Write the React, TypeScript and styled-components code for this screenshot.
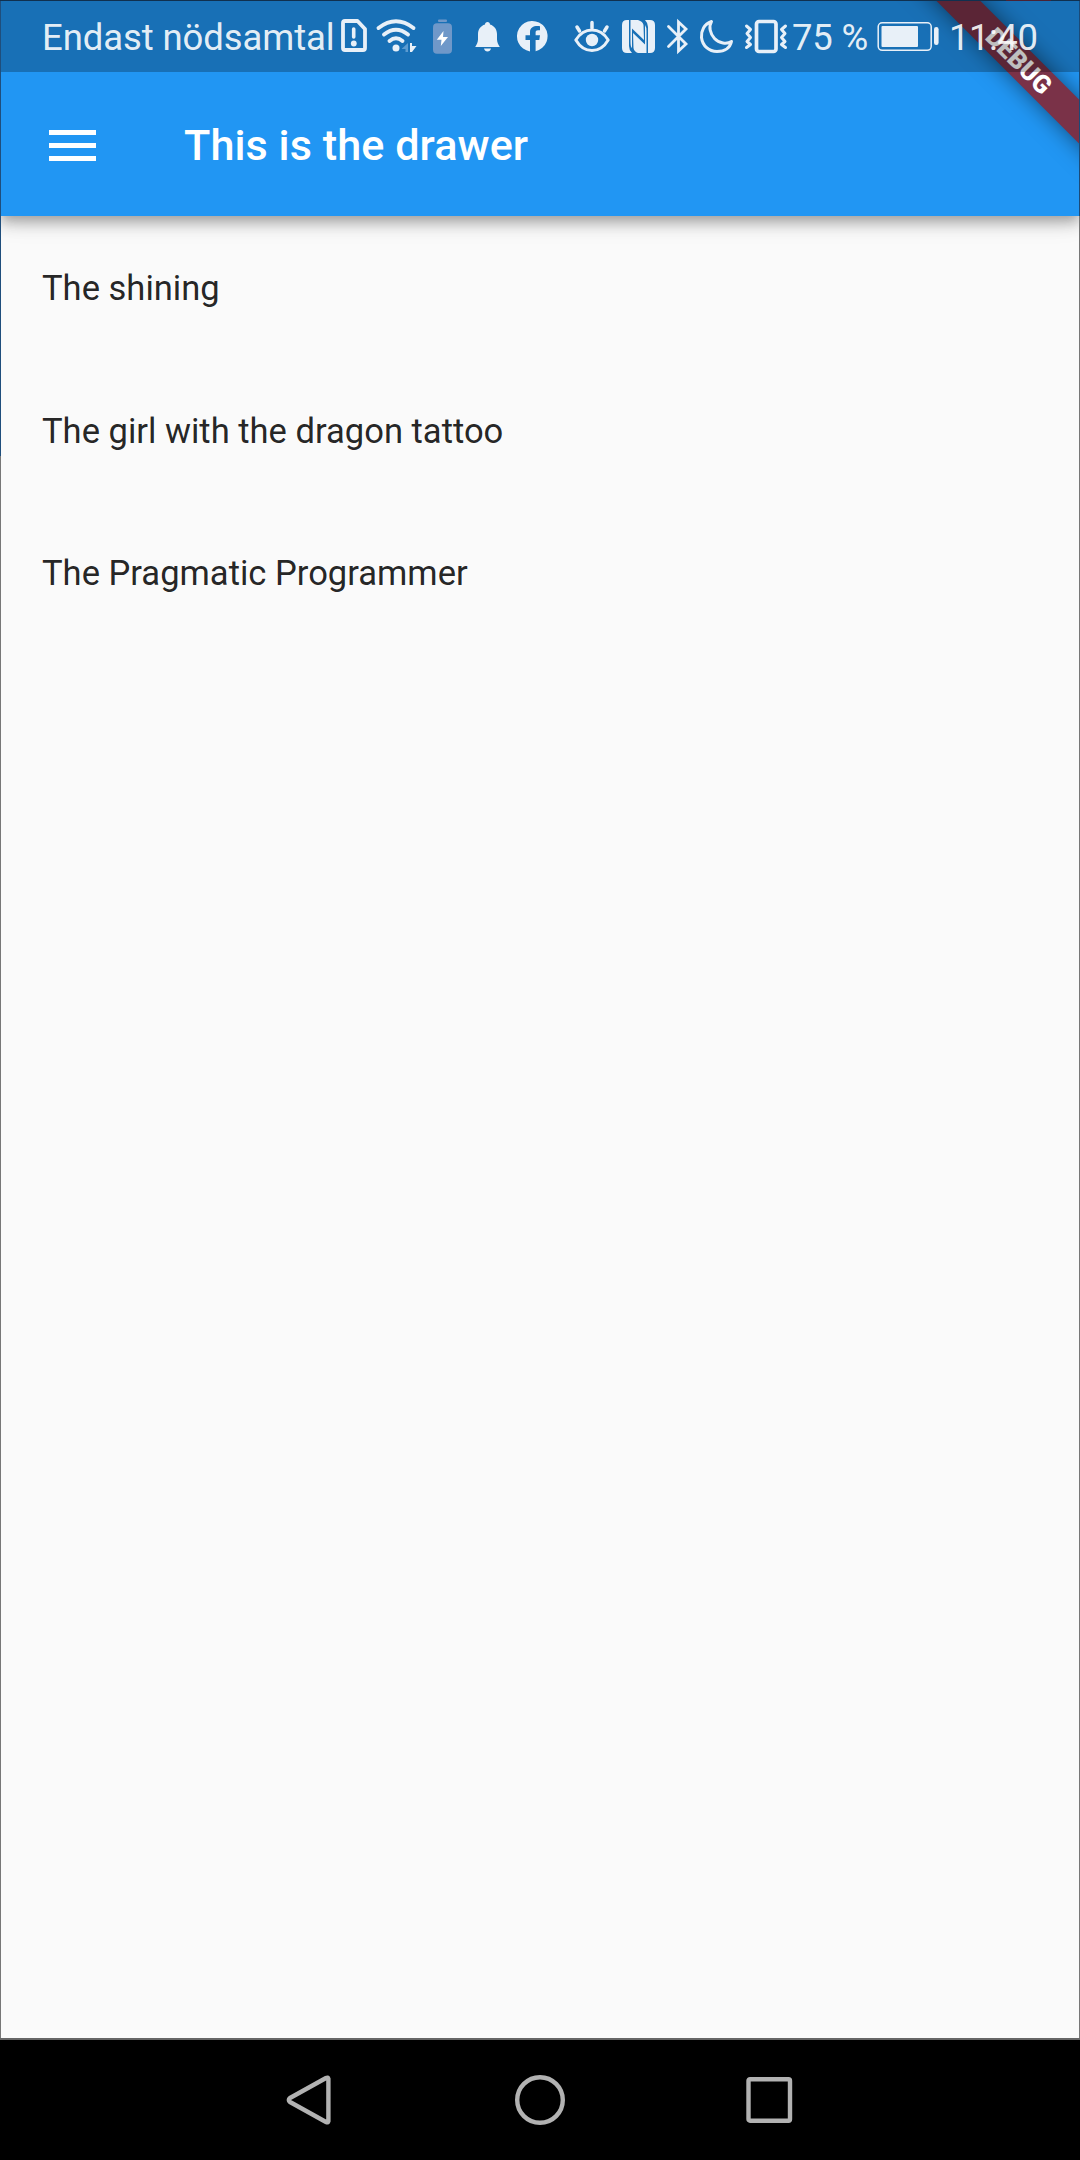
import React from 'react';
import styled, { createGlobalStyle } from 'styled-components';

const GlobalStyle = createGlobalStyle`
  *, *::before, *::after { box-sizing: border-box; }
  html, body { margin: 0; padding: 0; background: #000; }
`;

const Phone = styled.div`
  position: relative;
  width: 1080px;
  height: 2160px;
  display: flex;
  flex-direction: column;
  overflow: hidden;
  background: #fafafa;
  font-family: Roboto, 'Liberation Sans', sans-serif;
`;

const Header = styled.header`
  flex: none;
  height: 216px;
  background: #2196f3;
  box-shadow: 0 5px 10px -2.5px rgba(0, 0, 0, 0.2), 0 10px 13px rgba(0, 0, 0, 0.14),
    0 2.5px 26px rgba(0, 0, 0, 0.12);
`;

const StatusBar = styled.div`
  position: relative;
  z-index: 2;
  height: 72px;
  display: flex;
  align-items: center;
  padding-left: 42px;
  background: rgba(0, 0, 0, 0.25);
`;

const StatusText = styled.span<{ $width: number; $spacing?: number }>`
  flex: none;
  width: ${(p) => p.$width}px;
  padding-top: 3px;
  font-size: 36.5px;
  line-height: 69px;
  letter-spacing: ${(p) => p.$spacing ?? 0}px;
  white-space: nowrap;
  color: rgba(255, 255, 255, 0.9);
`;

const StatusSvg = styled.svg`
  flex: none;
  display: block;
  height: 72px;
  color: #e8f0f8;
  stroke-linecap: round;
  stroke-linejoin: round;
`;

const Toolbar = styled.div`
  height: 144px;
  display: flex;
  align-items: center;
  padding-left: 49px;
`;

const MenuButton = styled.button`
  width: 47px;
  height: 31px;
  margin: 3px 88px 0 0;
  padding: 0;
  border: 0;
  background: none;
  display: flex;
  flex-direction: column;
  justify-content: space-between;
`;

const MenuLine = styled.span`
  height: 5.3px;
  background: #fff;
`;

const Title = styled.h1`
  margin: 3px 0 0;
  font-size: 43.2px;
  font-weight: 500;
  line-height: 50px;
  letter-spacing: 0.06px;
  color: #fff;
  white-space: nowrap;
`;

const List = styled.ul`
  flex: 1;
  margin: 0;
  padding: 0;
  list-style: none;
`;

const Item = styled.li`
  height: 142.5px;
  display: flex;
  align-items: center;
  padding: 2px 42px 0;
  font-size: 34.56px;
  color: rgba(0, 0, 0, 0.87);
`;

const NavBar = styled.nav`
  flex: none;
  height: 122px;
  display: flex;
  justify-content: center;
  align-items: center;
  gap: 178px;
  background: #000;
  border-top: 2px solid #666;
`;

const NavIcon = styled.svg`
  display: block;
  width: 52px;
  height: 52px;
  fill: none;
  stroke: #b2b2b2;
  stroke-width: 4.4;
  stroke-linejoin: round;
`;

const DebugBanner = styled.div`
  position: absolute;
  z-index: 1;
  top: 44.5px;
  left: 868px;
  width: 300px;
  height: 31px;
  display: flex;
  align-items: center;
  justify-content: center;
  padding-left: 2px;
  transform: rotate(45deg);
  background: #7a3248;
  box-shadow: 0 0 22px rgba(0, 0, 0, 0.5);
  font-size: 25.4px;
  font-weight: 900;
  line-height: 31px;
  color: #fff;
`;

const TopEdge = styled.div`
  position: absolute;
  z-index: 3;
  top: 0;
  left: 0;
  width: 1080px;
  height: 1px;
  background: linear-gradient(90deg, #10304f 1006px, #4a2234 1006px 1051px, #10304f 1051px);
`;

const FrameEdge = styled.div<{ $side: 'left' | 'right' }>`
  position: absolute;
  z-index: 3;
  top: 0;
  height: 2038px;
  width: 1px;
  ${(p) => p.$side}: 0;
  background: ${(p) =>
    p.$side === 'left'
      ? 'linear-gradient(#1f4e7c 456px, #777 456px)'
      : 'linear-gradient(#1a4a78 216px, #777 216px)'};
`;

type GlyphProps = { x: number; w: number; children: React.ReactNode };

const Glyph = ({ x, w, children }: GlyphProps) => (
  <StatusSvg width={w} viewBox={`${x} 0 ${w} 72`} fill="currentColor">
    {children}
  </StatusSvg>
);

const line = { fill: 'none', stroke: 'currentColor' };

const SimAlert = () => (
  <Glyph x={336} w={36}>
    <path {...line} strokeWidth="3.8" d="M345 21H357.5L365 29V48Q365 50 363 50H345Q343 50 343 48V23Q343 21 345 21Z" />
    <path {...line} strokeWidth="3.6" d="M353.7 29V37" />
    <circle cx="353.8" cy="43.5" r="2.9" />
  </Glyph>
);

const Wifi = () => (
  <Glyph x={372} w={52}>
    <g {...line} strokeWidth="3.9">
      <path d="M378.5 28Q396 14.5 413.5 28" />
      <path d="M384 34.5Q396 25 408 34.5" />
      <path d="M389.5 41Q396 35.5 402.5 41" />
    </g>
    <circle cx="396" cy="48" r="3.5" />
    <path fill="#5c9bd0" d="M408 43V52H405.5V49H401.5Z" />
    <path d="M410 43H412V46H416.5L412 52H410Z" />
  </Glyph>
);

const Charging = () => (
  <Glyph x={424} w={38}>
    <g fill="#6f98c9">
      <rect x="438" y="19.5" width="9" height="2.4" rx="1" />
      <rect x="433" y="23.2" width="19" height="30.5" rx="4" />
    </g>
    <path fill="#fff" d="M443.5 31L436.8 39.8H441.5L440.8 46L448 37H443Z" />
  </Glyph>
);

const Bell = () => (
  <Glyph x={462} w={46}>
    <path d="M487.5 22C489 22 490 23 490 24.6C494.5 26 496.8 29.5 497 34V39.5C497.2 42.5 498 44.3 499.8 47H475.2C477 44.3 477.8 42.5 478 39.5V34C478.2 29.5 480.5 26 485 24.6C485 23 486 22 487.5 22Z" />
    <path d="M484 48.5H491C490.5 50.5 489.3 51.5 487.5 51.5S484.5 50.5 484 48.5Z" />
  </Glyph>
);

const Facebook = () => (
  <Glyph x={508} w={52}>
    <path d="M530 51.4A15.3 15.3 0 1 1 535.6 51.2V40H539.3L540 35.2H535.6V32.5C535.6 31 536.4 30.2 538 30.2H540V26.2C534.5 25.4 530 27 530 32V35.2H525.5V40H530Z" />
  </Glyph>
);

const Eye = () => (
  <Glyph x={560} w={56}>
    <path {...line} strokeWidth="3" d="M575.8 40C584 26.8 600 26.8 608.2 40C600 54 584 54 575.8 40Z" />
    <circle cx="592" cy="40" r="6.2" />
    <path {...line} strokeWidth="3.5" d="M577 27L579.5 31M592 22.5V28M607 27L604.5 31" />
  </Glyph>
);

const Nfc = () => (
  <Glyph x={616} w={45}>
    <path d="M622 25Q622 20 627 20H629V46Q629 50 632 53H627Q622 53 622 48Z" />
    <path d="M630.5 20H638Q643 21.5 643.5 25L644 40L632 28.5V48Q630.5 47 630.5 42Z" />
    <path d="M655 48Q655 53 650 53H648V27Q648 23 645 20H650Q655 20 655 25Z" />
    <path d="M646.5 53H638Q634 51.5 633.5 48L633 33L645 44.5V25Q646.5 27 646.5 31Z" />
  </Glyph>
);

const Bluetooth = () => (
  <Glyph x={661} w={33}>
    <path {...line} strokeWidth="2.8" strokeLinejoin="miter" d="M668.5 26.5L686 44L678.5 51V22L686 29L668.5 46.5" />
  </Glyph>
);

const Moon = () => (
  <Glyph x={694} w={46}>
    <path {...line} strokeWidth="3" d="M711.5 21.5C704 24 701 31 701.5 37.5C702.5 46 709 51.5 717 51.5C724.5 51.5 730 48 731.5 41.5C727 44.5 719 43.5 714.5 38.5C710 33.5 708.5 26.5 711.5 21.5Z" />
  </Glyph>
);

const Vibrate = () => (
  <Glyph x={740} w={52}>
    <g {...line}>
      <rect x="756.5" y="21.5" width="19.5" height="30" rx="2.5" strokeWidth="3.7" />
      <path strokeWidth="3" d="M746.5 26L750.5 29.5L747 33.5L750.5 37.5L747 41.5L750.5 44.5L746.5 47.5" />
      <path strokeWidth="3" d="M785.5 26L781.5 29.5L785 33.5L781.5 37.5L785 41.5L781.5 44.5L785.5 47.5" />
    </g>
  </Glyph>
);

const Battery = () => (
  <Glyph x={872} w={77}>
    <rect {...line} strokeWidth="1.5" x="878.2" y="22.8" width="53" height="27.5" rx="4" />
    <rect x="881.5" y="26" width="36.5" height="21" rx="1" />
    <rect x="934" y="27" width="4.6" height="18" rx="2.2" />
  </Glyph>
);

const books = ['The shining', 'The girl with the dragon tattoo', 'The Pragmatic Programmer'];

export default function App() {
  return (
    <>
      <GlobalStyle />
      <Phone>
        <Header>
          <StatusBar>
            <StatusText $width={294} $spacing={-0.1}>
              Endast nödsamtal
            </StatusText>
            <SimAlert />
            <Wifi />
            <Charging />
            <Bell />
            <Facebook />
            <Eye />
            <Nfc />
            <Bluetooth />
            <Moon />
            <Vibrate />
            <StatusText $width={80} $spacing={-0.2}>
              75 %
            </StatusText>
            <Battery />
            <StatusText $width={90} $spacing={-0.5}>
              11:40
            </StatusText>
          </StatusBar>
          <Toolbar>
            <MenuButton aria-label="Menu">
              <MenuLine />
              <MenuLine />
              <MenuLine />
            </MenuButton>
            <Title>This is the drawer</Title>
          </Toolbar>
        </Header>
        <DebugBanner>DEBUG</DebugBanner>
        <List>
          {books.map((title) => (
            <Item key={title}>{title}</Item>
          ))}
        </List>
        <NavBar>
          <NavIcon viewBox="0 0 52 52">
            <path d="M44.4 4.8V47.2Q44 49 42 48L6 28Q3.6 26 6 24L42 4Q44 3 44.4 4.8Z" />
          </NavIcon>
          <NavIcon viewBox="0 0 52 52">
            <circle cx="26" cy="26" r="22.8" />
          </NavIcon>
          <NavIcon viewBox="0 0 52 52">
            <rect x="4.5" y="5.2" width="41.5" height="41.5" rx="1.5" />
          </NavIcon>
        </NavBar>
        <FrameEdge $side="left" />
        <FrameEdge $side="right" />
        <TopEdge />
      </Phone>
    </>
  );
}
